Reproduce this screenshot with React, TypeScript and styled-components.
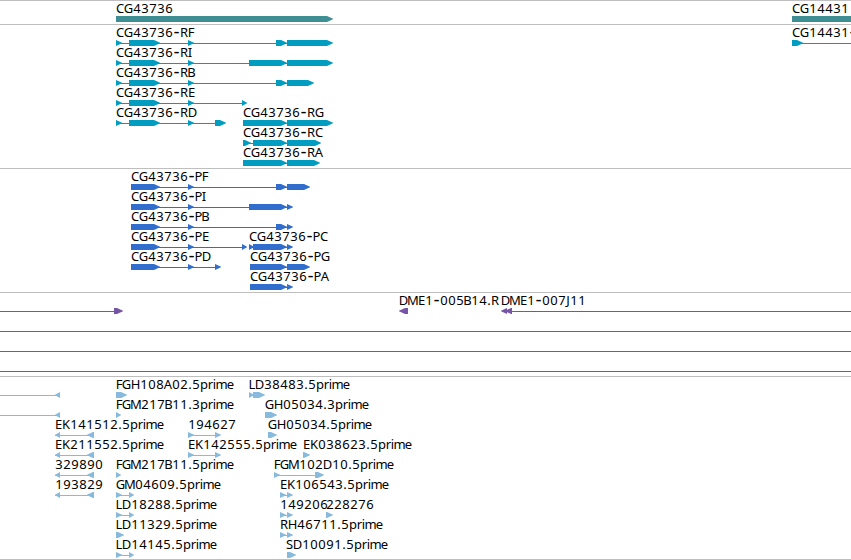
import React from "react";
import styled, { createGlobalStyle } from "styled-components";

const GlobalStyle = createGlobalStyle`
  body {
    margin: 0;
    background: #fff;
  }
`;

const Browser = styled.main`
  display: flex;
  flex-direction: column;
  box-sizing: border-box;
  width: 851px;
  height: 560px;
  overflow: hidden;
  background: #fff;
  border-bottom: 1px solid #bebebe;
`;

const Track = styled.section<{ $color: string }>`
  flex: none;
  display: flex;
  flex-direction: column;
  padding-top: 3px;
  border-top: 1px solid #bebebe;
  color: ${(p) => p.$color};
`;

const Lane = styled.svg`
  flex: none;
  display: block;
  width: 851px;
  height: 20px;
  overflow: visible;
`;

const Name = styled.text`
  fill: #000;
  font-family: "Noto Sans", "Open Sans", sans-serif;
  font-size: 13px;
  text-anchor: middle;
`;

const Hyphen = styled.tspan`
  font-family: "DejaVu Sans", sans-serif;
  font-size: 17px;
`;

type Span = [number, number];

interface Feature {
  name?: string;
  at?: number;
  blocks: Span[];
  line?: Span;
  reverse?: boolean;
}

interface TrackData {
  id: string;
  color: string;
  lanes: Feature[][];
}

/* Cell width of each character in a feature name. */
const CELL: Record<string, number> = {
  A: 8, B: 7, C: 8, D: 9, E: 7, F: 6, G: 9, H: 9, I: 4, J: 4, K: 8, L: 6,
  M: 10, P: 7, R: 8, S: 7, "-": 7, ".": 4, p: 8, r: 5, i: 3, m: 11, e: 7,
};

function cellCentres(name: string, start: number): string {
  let x = start;
  return [...name]
    .map((c) => {
      const w = CELL[c] ?? 8;
      const centre = x + w / 2;
      x += w;
      return centre;
    })
    .join(" ");
}

function blockPath([a, b]: Span, reverse?: boolean): string {
  const tip = Math.min(6, b - a);
  return reverse
    ? `M${b} 12V18H${a + tip}L${a} 15.2V14.8L${a + tip} 12Z`
    : `M${a} 12V18H${b - tip}L${b} 15.2V14.8L${b - tip} 12Z`;
}

function FeatureGlyph({ name, at, blocks, line, reverse }: Feature) {
  const first = blocks[0]?.[0] ?? 0;
  const last = blocks[blocks.length - 1]?.[1] ?? 0;
  const [from, to] = line ?? [first, last - 2];
  return (
    <g fill="currentColor">
      {(line || blocks.length > 1) && (
        <rect x={from} y={15} width={to - from} height={1} shapeRendering="crispEdges" />
      )}
      {blocks.map((b) => (
        <path key={b[0]} d={blockPath(b, reverse)} />
      ))}
      {name && (
        <Name x={cellCentres(name, at ?? first)} y={9}>
          {name.split("-").map((part, i) => (
            <React.Fragment key={i}>
              {i > 0 && <Hyphen>-</Hyphen>}
              {part}
            </React.Fragment>
          ))}
        </Name>
      )}
    </g>
  );
}

const START: Span[] = [[116, 122], [129, 160], [188, 194]];
const CODING: Span[] = [[131, 160], [188, 194]];
const LEFT_PAIR: Span[] = [[55, 60], [87, 94]];
const MID_PAIR: Span[] = [[188, 194], [215, 221]];
const CLONE_PAIR: Span[] = [[116, 122], [129, 134]];
const CLOSE_PAIR: Span[] = [[280, 286], [287, 293]];
const FULL: Feature = { blocks: [], line: [0, 851] };

const tracks: TrackData[] = [
  {
    id: "gene",
    color: "#3e8e94",
    lanes: [[
      { name: "CG43736", blocks: [[116, 333]] },
      { name: "CG14431", blocks: [[792, 900]] },
    ]],
  },
  {
    id: "transcript",
    color: "#009dc0",
    lanes: [
      [
        { name: "CG43736-RF", blocks: [...START, [276, 287], [287, 333]] },
        { name: "CG14431-", blocks: [[792, 803]], line: [792, 851] },
      ],
      [{ name: "CG43736-RI", blocks: [...START, [249, 287], [287, 333]] }],
      [{ name: "CG43736-RB", blocks: [...START, [276, 287], [287, 314]] }],
      [{ name: "CG43736-RE", blocks: [...START, [242, 247]] }],
      [
        { name: "CG43736-RD", blocks: [...START, [215, 226]] },
        { name: "CG43736-RG", blocks: [[243, 287], [287, 333]] },
      ],
      [{ name: "CG43736-RC", blocks: [[243, 251], [253, 287], [287, 321]] }],
      [{ name: "CG43736-RA", blocks: [[243, 287], [287, 320]] }],
    ],
  },
  {
    id: "protein",
    color: "#306dcd",
    lanes: [
      [{ name: "CG43736-PF", blocks: [...CODING, [276, 287], [287, 310]] }],
      [{ name: "CG43736-PI", blocks: [...CODING, [249, 287], [287, 293]] }],
      [{ name: "CG43736-PB", blocks: [...CODING, [276, 287], [287, 293]] }],
      [
        { name: "CG43736-PE", blocks: [...CODING, [242, 247]] },
        { name: "CG43736-PC", blocks: [[249, 254], [253, 287], [287, 293]] },
      ],
      [
        { name: "CG43736-PD", blocks: [...CODING, [215, 221]] },
        { name: "CG43736-PG", blocks: [[250, 287], [287, 310]] },
      ],
      [{ name: "CG43736-PA", blocks: [[250, 287], [287, 293]] }],
    ],
  },
  {
    id: "bac",
    color: "#7655a7",
    lanes: [
      [
        { blocks: [[114, 123]], line: [0, 116] },
        { name: "DME1-005B14.R", blocks: [[399, 408]], reverse: true },
        { name: "DME1-007J11", blocks: [[501, 507], [505, 512]], line: [505, 851], reverse: true },
      ],
      [FULL],
      [FULL],
      [FULL],
    ],
  },
  {
    id: "est",
    color: "#87badc",
    lanes: [
      [
        { blocks: [[55, 60]], line: [0, 58], reverse: true },
        { name: "FGH108A02.5prime", blocks: [[116, 127]] },
        { name: "LD38483.5prime", blocks: [[249, 254], [253, 265]] },
      ],
      [
        { blocks: [[55, 60]], line: [0, 58], reverse: true },
        { name: "FGM217B11.3prime", blocks: [[116, 121]] },
        { name: "GH05034.3prime", blocks: [[265, 277]] },
      ],
      [
        { name: "EK141512.5prime", blocks: LEFT_PAIR, reverse: true },
        { name: "194627", blocks: MID_PAIR },
        { name: "GH05034.5prime", blocks: [[268, 277]] },
      ],
      [
        { name: "EK211552.5prime", blocks: LEFT_PAIR, reverse: true },
        { name: "EK142555.5prime", blocks: MID_PAIR },
        { name: "EK038623.5prime", blocks: [[303, 310]] },
      ],
      [
        { name: "329890", blocks: LEFT_PAIR, reverse: true },
        { name: "FGM217B11.5prime", blocks: [[116, 121]] },
        { name: "FGM102D10.5prime", blocks: [[274, 280], [315, 324]] },
      ],
      [
        { name: "193829", blocks: LEFT_PAIR, reverse: true },
        { name: "GM04609.5prime", blocks: CLONE_PAIR },
        { name: "EK106543.5prime", blocks: CLOSE_PAIR },
      ],
      [
        { name: "LD18288.5prime", blocks: CLONE_PAIR },
        { name: "149206", blocks: CLOSE_PAIR },
        { name: "228276", blocks: [[326, 333]] },
      ],
      [
        { name: "LD11329.5prime", blocks: [[116, 124]] },
        { name: "RH46711.5prime", blocks: CLOSE_PAIR },
      ],
      [
        { name: "LD14145.5prime", blocks: CLONE_PAIR },
        { name: "SD10091.5prime", at: 286, blocks: [[287, 296]] },
      ],
    ],
  },
];

export default function App() {
  return (
    <>
      <GlobalStyle />
      <Browser>
        {tracks.map((track) => (
          <Track key={track.id} $color={track.color}>
            {track.lanes.map((lane, i) => (
              <Lane key={i} viewBox="0 0 851 20">
                {lane.map((feature, j) => (
                  <FeatureGlyph key={j} {...feature} />
                ))}
              </Lane>
            ))}
          </Track>
        ))}
      </Browser>
    </>
  );
}
